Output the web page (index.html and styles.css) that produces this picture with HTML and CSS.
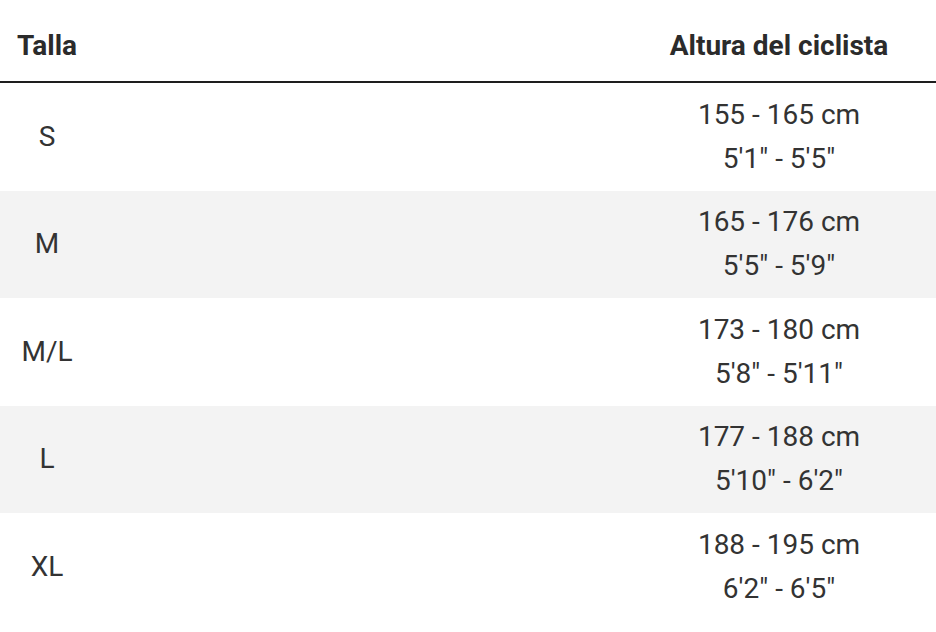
FILE: index.html
```html
<!DOCTYPE html>
<html lang="es">
<head>
<meta charset="utf-8">
<title>Tallas</title>
<link rel="stylesheet" href="styles.css">
</head>
<body>
<table class="size-table">
  <colgroup>
    <col class="c-size">
    <col class="c-gap1">
    <col class="c-gap2">
    <col class="c-height">
  </colgroup>
  <thead>
    <tr>
      <th class="cell-size">Talla</th>
      <th></th>
      <th></th>
      <th class="cell-height">Altura del ciclista</th>
    </tr>
  </thead>
  <tbody>
    <tr>
      <td class="cell-size">S</td><td></td><td></td>
      <td class="cell-height"><span class="line">155 - 165 cm</span><span class="line">5'1" - 5'5"</span></td>
    </tr>
    <tr class="alt">
      <td class="cell-size">M</td><td></td><td></td>
      <td class="cell-height"><span class="line">165 - 176 cm</span><span class="line">5'5" - 5'9"</span></td>
    </tr>
    <tr>
      <td class="cell-size">M/L</td><td></td><td></td>
      <td class="cell-height"><span class="line">173 - 180 cm</span><span class="line">5'8" - 5'11"</span></td>
    </tr>
    <tr class="alt">
      <td class="cell-size">L</td><td></td><td></td>
      <td class="cell-height"><span class="line">177 - 188 cm</span><span class="line">5'10" - 6'2"</span></td>
    </tr>
    <tr>
      <td class="cell-size">XL</td><td></td><td></td>
      <td class="cell-height"><span class="line">188 - 195 cm</span><span class="line">6'2" - 6'5"</span></td>
    </tr>
  </tbody>
</table>
</body>
</html>
```

FILE: styles.css
```css
html, body {
  margin: 0;
  padding: 0;
  background: #ffffff;
}

body {
  font-family: Roboto, "Liberation Sans", Arial, sans-serif;
  color: #333333;
}

.size-table {
  width: 936px;
  border-collapse: collapse;
  table-layout: fixed;
}

.c-size { width: 94px; }
.c-gap1 { width: 255px; }
.c-gap2 { width: 273px; }
.c-height { width: 314px; }

.size-table th {
  height: 70px;
  padding: 11px 0 0;
  box-sizing: content-box;
  font-size: 28px;
  font-weight: 700;
  line-height: 44px;
  color: #2b2b2b;
  text-align: center;
  vertical-align: middle;
  border-bottom: 2px solid #1e1e1e;
}

.size-table td {
  padding: 9.75px 0;
  font-size: 28px;
  line-height: 44px;
  text-align: center;
  vertical-align: middle;
  height: 88px;
}

.size-table tr.alt td {
  background: #f3f3f3;
}

.line {
  display: block;
  line-height: 44px;
}
```
